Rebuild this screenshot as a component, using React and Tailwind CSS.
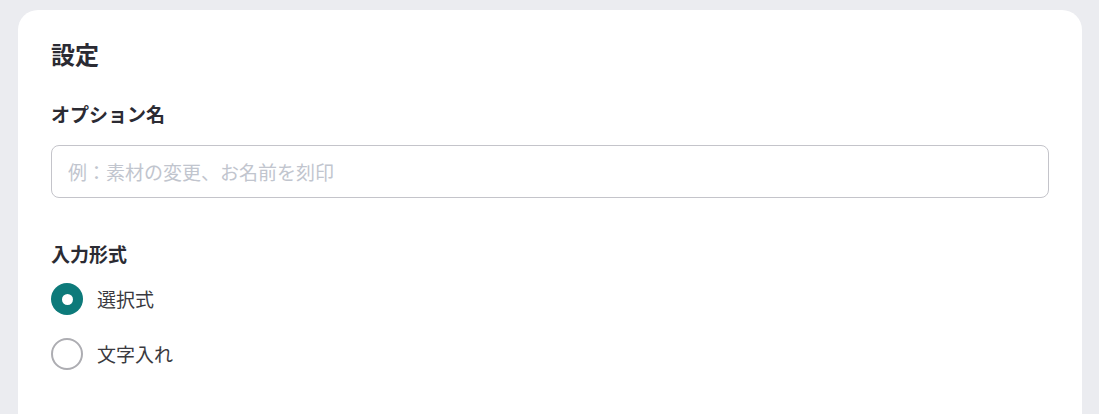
import React, { useState } from 'react';

const font = { fontFamily: '"Noto Sans CJK JP", "Noto Sans", sans-serif' };

function Radio({ checked, label, onClick }) {
    return (
        <label className="flex items-center gap-[14px] cursor-pointer" onClick={onClick}>
            {checked ? (
                <span className="w-8 h-8 rounded-full bg-[#0d7a7a] flex items-center justify-center">
                    <span className="w-[11px] h-[11px] rounded-full bg-white" />
                </span>
            ) : (
                <span className="w-8 h-8 rounded-full border-2 border-[#adadb2] bg-white" />
            )}
            <span className="text-[19px] leading-7 text-[#3a3a40]">{label}</span>
        </label>
    );
}

export default function App() {
    const [mode, setMode] = useState('select');

    return (
        <div className="h-screen overflow-hidden bg-[#ebecf0] pt-[10px] pl-[18px] pr-[17px]" style={font}>
            <div className="bg-white rounded-[20px] px-[33px] pt-[28px] pb-20">
                <h2 className="text-2xl leading-8 font-bold text-[#2b2b33]">設定</h2>

                <div className="mt-[30px]">
                    <label className="block text-[19px] leading-7 font-bold text-[#2b2b33] mb-[17px]">オプション名</label>
                    <input
                        type="text"
                        placeholder="例：素材の変更、お名前を刻印"
                        className="w-full h-[53px] px-4 border border-[#c4c4ca] rounded-lg text-[19px] placeholder:text-[#c1c5ce] focus:outline-none"
                    />
                </div>

                <div className="mt-[42px]">
                    <p className="text-[19px] leading-7 font-bold text-[#2b2b33] mb-[15px]">入力形式</p>
                    <div className="flex flex-col gap-[23px]">
                        <Radio checked={mode === 'select'} label="選択式" onClick={() => setMode('select')} />
                        <Radio checked={mode === 'text'} label="文字入れ" onClick={() => setMode('text')} />
                    </div>
                </div>
            </div>
        </div>
    );
}
